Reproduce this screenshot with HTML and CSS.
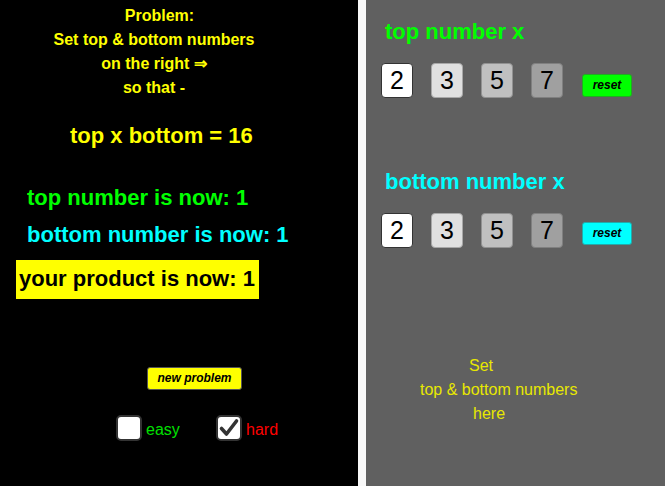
FILE: index.html
```html
<!DOCTYPE html>
<html>
<head>
<meta charset="utf-8">
<link rel="stylesheet" href="styles.css">
</head>
<body>
<div class="page">
  <div class="left">
    <div class="problem">
      <div class="problem-title">Problem:</div>
      <div>Set top &amp; bottom numbers</div>
      <div>on the right &rArr;</div>
      <div>so that -</div>
    </div>
    <div class="target">top x bottom = 16</div>
    <div class="status status-top">top number is now: 1</div>
    <div class="status status-bottom">bottom number is now: 1</div>
    <div class="product-row"><span class="product">your product is now: 1</span></div>
    <div class="new-row"><button class="btn btn-new">new problem</button></div>
    <div class="levels">
      <div class="level">
        <span class="check"></span><span class="lbl lbl-easy">easy</span>
      </div>
      <div class="level">
        <span class="check"><svg width="22" height="22" viewBox="0 0 22 22"><path d="M3.5 11.5 L8.5 17 L18.5 4" fill="none" stroke="#333" stroke-width="3.6" stroke-linecap="round" stroke-linejoin="round"/></svg></span><span class="lbl lbl-hard">hard</span>
      </div>
    </div>
  </div>
  <div class="right">
    <div class="title title-top">top number x</div>
    <div class="keys">
      <div class="key key-2">2</div>
      <div class="key key-3">3</div>
      <div class="key key-5">5</div>
      <div class="key key-7">7</div>
      <button class="btn btn-reset btn-green reset-1">reset</button>
    </div>
    <div class="title title-bottom">bottom number x</div>
    <div class="keys">
      <div class="key key-2">2</div>
      <div class="key key-3">3</div>
      <div class="key key-5">5</div>
      <div class="key key-7">7</div>
      <button class="btn btn-reset btn-cyan reset-2">reset</button>
    </div>
    <div class="hint">
      <div class="hint-1">Set</div>
      <div class="hint-2">top &amp; bottom numbers</div>
      <div class="hint-3">here</div>
    </div>
  </div>
</div>
</body>
</html>
```
FILE: styles.css
```css
html, body {
  margin: 0;
  padding: 0;
  background: #f8f8f8;
  font-family: "Liberation Sans", Arial, sans-serif;
}
.page {
  display: flex;
  width: 665px;
  height: 486px;
  overflow: hidden;
}
.left {
  width: 358px;
  height: 486px;
  background: #000;
  padding-top: 4px;
  box-sizing: border-box;
  flex-shrink: 0;
}
.right {
  margin-left: 8px;
  flex: 1;
  height: 486px;
  background: #606060;
  padding-top: 19px;
  box-sizing: border-box;
}
.problem {
  width: 308px;
  text-align: center;
  color: #ffff00;
  font-weight: bold;
  font-size: 16px;
  line-height: 24px;
}
.problem-title {
  padding-left: 11px;
}
.target {
  margin-top: 23px;
  padding-left: 70px;
  color: #ffff00;
  font-weight: bold;
  font-size: 22px;
  line-height: 26px;
}
.status {
  padding-left: 27px;
  font-weight: bold;
  font-size: 22px;
  line-height: 26px;
}
.status-top {
  margin-top: 36px;
  color: #00ff00;
}
.status-bottom {
  margin-top: 11px;
  color: #00ffff;
}
.product-row {
  margin-top: 12px;
  padding-left: 16px;
  height: 39px;
}
.product {
  display: inline-block;
  height: 39px;
  box-sizing: border-box;
  background: #ffff00;
  color: #000;
  font-weight: bold;
  font-size: 22px;
  line-height: 37px;
  padding: 0 4px 2px 3px;
}
.new-row {
  margin-top: 68px;
  padding-left: 147px;
}
.btn {
  display: block;
  margin: 0;
  padding: 0;
  height: 23px;
  border: 1px solid #555;
  border-radius: 3px;
  font-family: "Liberation Sans", Arial, sans-serif;
  font-size: 12px;
  font-weight: bold;
  font-style: italic;
  color: #000;
  line-height: 21px;
  text-align: center;
}
.btn-new {
  width: 95px;
  background: #ffff00;
}
.levels {
  display: flex;
  margin-top: 25px;
  padding-left: 116px;
}
.level {
  display: flex;
  align-items: center;
  width: 100px;
}
.check {
  width: 26px;
  height: 26px;
  box-sizing: border-box;
  background: #fff;
  border: 2px solid #333;
  border-radius: 5px;
  display: flex;
  align-items: center;
  justify-content: center;
}
.lbl {
  margin-left: 4px;
  font-size: 16px;
  line-height: 20px;
  padding-top: 3px;
}
.lbl-easy {
  color: #00e000;
}
.lbl-hard {
  color: #ff0000;
}
.title {
  padding-left: 19px;
  font-weight: bold;
  font-size: 22px;
  line-height: 26px;
}
.title-top {
  color: #00ff00;
}
.title-bottom {
  margin-top: 71px;
  color: #00ffff;
}
.keys {
  display: flex;
  align-items: flex-start;
  margin-top: 18px;
  padding-left: 15px;
  gap: 18px;
}
.key {
  width: 32px;
  height: 35px;
  box-sizing: border-box;
  border-radius: 4px;
  border: 1px solid #888;
  font-size: 25px;
  line-height: 33px;
  text-align: center;
  color: #000;
}
.key-2 {
  background: #fff;
  border-color: #333;
}
.key-3 {
  background: #e0e0e0;
  border-color: #a8a8a8;
}
.key-5 {
  background: #c0c0c0;
  border-color: #929292;
}
.key-7 {
  background: #a0a0a0;
  border-color: #808080;
}
.btn-reset {
  width: 50px;
  margin-left: 1px;
}
.btn-green {
  background: #00ff00;
  border-color: #22aa22;
}
.btn-cyan {
  background: #00ffff;
  border-color: #22aaaa;
}
.reset-1 {
  margin-top: 11px;
}
.reset-2 {
  margin-top: 9px;
}
.hint {
  margin-top: 106px;
  color: #e8e800;
  font-size: 16px;
  line-height: 24px;
}
.hint-1 {
  padding-left: 103px;
}
.hint-2 {
  padding-left: 54px;
}
.hint-3 {
  padding-left: 107px;
}
```
